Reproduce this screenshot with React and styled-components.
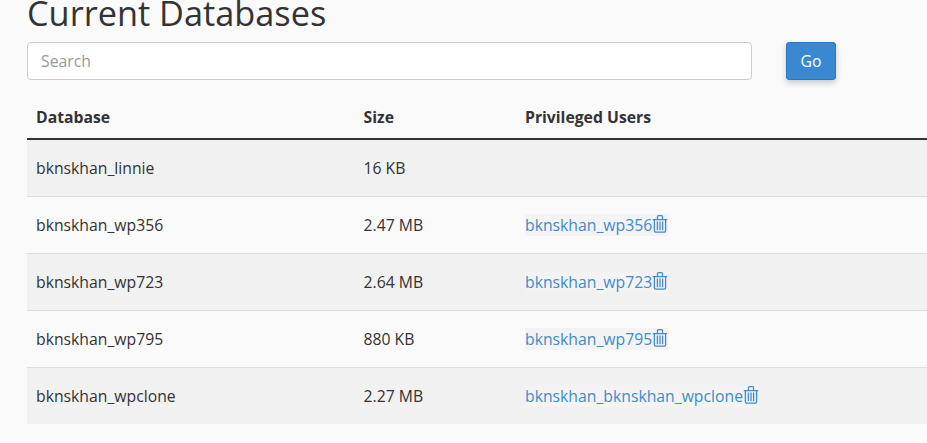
import React from "react";
import styled, { createGlobalStyle } from "styled-components";

const Global = createGlobalStyle`
  html, body { margin: 0; padding: 0; background: #fafafa; height: 100%; overflow: hidden; }
  body { font-family: "Open Sans", sans-serif; color: #333; }
`;

const Page = styled.main`
  width: 927px;
  height: 443px;
  overflow: hidden;
  padding-left: 27px;
  box-sizing: border-box;
`;

const Title = styled.h1`
  margin: -9px 0 0;
  font-size: 34.3px;
  line-height: 44px;
  font-weight: 400;
  color: #333;
`;

const SearchRow = styled.form`
  display: flex;
  align-items: flex-start;
  gap: 34px;
  margin-top: 7px;
`;

const SearchInput = styled.input`
  width: 725px;
  height: 38px;
  box-sizing: border-box;
  padding: 0 13px;
  border: 1px solid #ccc;
  border-radius: 4px;
  background: #fff;
  font: 15.75px/20px "Open Sans", sans-serif;
  color: #333;
  &::placeholder { color: #999; opacity: 1; }
`;

const GoButton = styled.button`
  width: 50px;
  height: 38px;
  border: 1px solid #2f78bd;
  border-radius: 3px;
  background: #3a88d2;
  color: #fff;
  font: 15.75px/20px "Open Sans", sans-serif;
  box-shadow: 0 3px 6px rgba(0, 0, 0, 0.2);
  padding: 0;
`;

const Table = styled.table`
  width: 1000px;
  margin-top: 16px;
  border-collapse: separate;
  border-spacing: 0;
  table-layout: fixed;
  font-size: 15.75px;
  line-height: 20px;
`;

const HeadCell = styled.th`
  width: ${(p) => p.$w || "auto"};
  box-sizing: border-box;
  height: 44px;
  padding: 0 9px;
  text-align: left;
  font-weight: 700;
  border-bottom: 2px solid #333;
`;

const Row = styled.tr`
  background: ${(p) => (p.$shaded ? "#f1f1f1" : "transparent")};
`;

const Cell = styled.td`
  height: ${(p) => (p.$divider ? "57px" : "56px")};
  padding: 0 9px;
  box-sizing: border-box;
  border-top: ${(p) => (p.$divider ? "1px solid #ddd" : "0")};
`;

const UserWrap = styled.span`
  display: inline-flex;
  align-items: center;
  background: #f3f3f3;
  height: 22px;
`;

const UserLink = styled.a`
  color: #428bca;
  text-decoration: none;
`;

const TrashSvg = styled.svg`
  width: 16px;
  height: 18px;
  flex: none;
  align-self: flex-start;
  margin-top: 1px;
`;

const TrashIcon = () => (
  <TrashSvg viewBox="0 0 16 18" fill="none" stroke="#428bca" strokeWidth="1.3">
    <path d="M0.8 4.6h14.4M5.5 4.6V1.6c0-.5.3-.9.9-.9h3.2c.6 0 .9.4.9.9v3" />
    <path d="M2.4 4.6v11.2c0 .7.4 1.3 1.1 1.3h9c.7 0 1.1-.6 1.1-1.3V4.6" />
    <path d="M5.4 6.6v8.6M8 6.6v8.6M10.6 6.6v8.6" />
  </TrashSvg>
);

const rows = [
  { db: "bknskhan_linnie", size: "16 KB" },
  { db: "bknskhan_wp356", size: "2.47 MB", user: "bknskhan_wp356" },
  { db: "bknskhan_wp723", size: "2.64 MB", user: "bknskhan_wp723" },
  { db: "bknskhan_wp795", size: "880 KB", user: "bknskhan_wp795" },
  { db: "bknskhan_wpclone", size: "2.27 MB", user: "bknskhan_bknskhan_wpclone" },
];

export default function App() {
  return (
    <Page>
      <Global />
      <Title>Current Databases</Title>
      <SearchRow onSubmit={(e) => e.preventDefault()}>
        <SearchInput placeholder="Search" />
        <GoButton type="submit">Go</GoButton>
      </SearchRow>
      <Table>
        <thead>
          <tr>
            <HeadCell $w="327.5px">Database</HeadCell>
            <HeadCell $w="161.5px">Size</HeadCell>
            <HeadCell>Privileged Users</HeadCell>
          </tr>
        </thead>
        <tbody>
          {rows.map((r, i) => (
            <Row key={r.db} $shaded={i % 2 === 0}>
              <Cell $divider={i > 0}>{r.db}</Cell>
              <Cell $divider={i > 0}>{r.size}</Cell>
              <Cell $divider={i > 0}>
                {r.user && (
                  <UserWrap>
                    <UserLink href="#">{r.user}</UserLink>
                    <TrashIcon />
                  </UserWrap>
                )}
              </Cell>
            </Row>
          ))}
        </tbody>
      </Table>
    </Page>
  );
}
